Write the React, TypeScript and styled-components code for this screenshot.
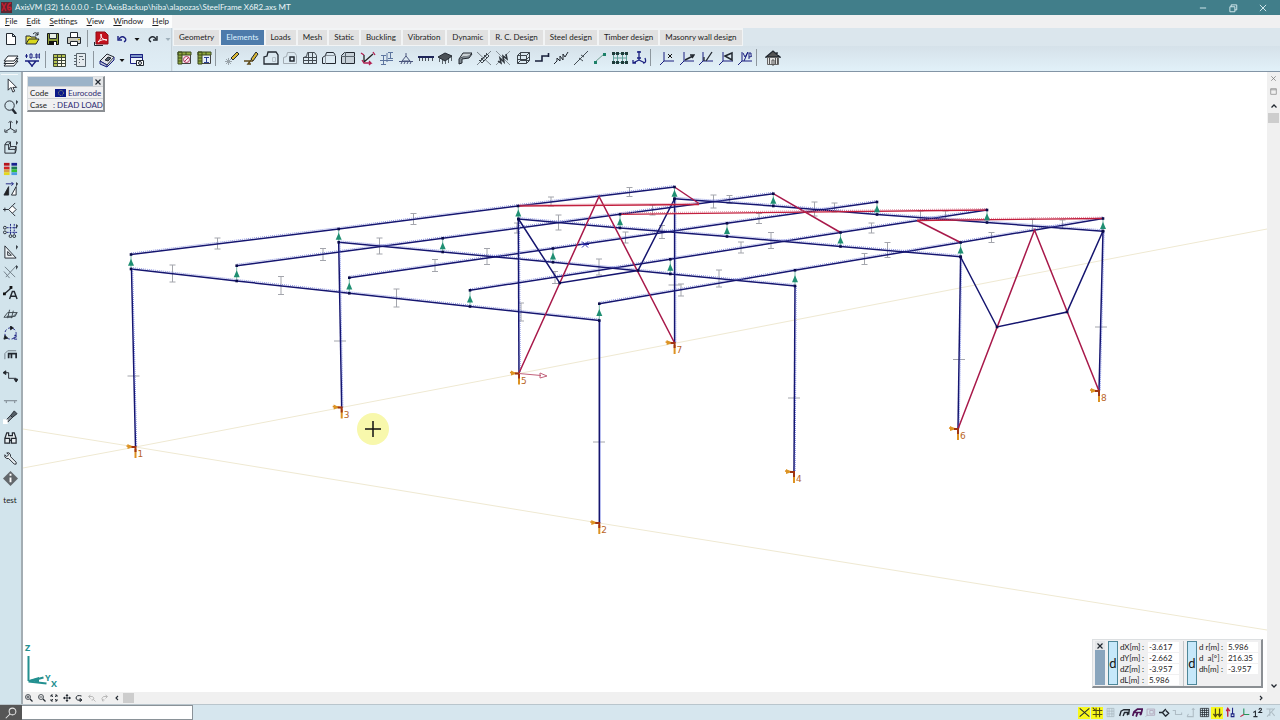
import React from 'react';
import styled, { createGlobalStyle, css } from 'styled-components';

const Global = createGlobalStyle`
  * { box-sizing: border-box; }
  body { margin: 0; background: #fff; }
  body, button, input { font-family: "Lato", "Open Sans", sans-serif; font-size: 8px; color: #1c1c1c; }
  button { border: 0; padding: 0; margin: 0; background: none; display: flex; align-items: center; justify-content: center; }
  svg { display: block; }
`;

const Page = styled.div`
  min-height: 100vh;
  display: flex;
  flex-direction: column;
`;
const TitleBar = styled.header`
  height: 15px;
  padding-right: 2px;
  display: flex;
  align-items: center;
  background: #417e8a;
  color: #eef6f8;
`;
const TitleText = styled.h1`
  margin: 0 auto 0 2px;
  font-size: 8px;
  line-height: 15px;
  font-weight: 400;
`;
const WindowButton = styled.button`
  width: 30px;
  height: 15px;
`;
const MenuBar = styled.nav`
  height: 13px;
  display: flex;
  background: #f0f0f1;
`;
const MenuGroup = styled.div`
  width: 172px;
  padding-left: 5px;
  display: flex;
  gap: 9px;
  background: #fcfdfd;
`;
const MenuItem = styled.button`
  height: 13px;
  line-height: 13px;
`;
const Ribbon = styled.div`
  height: 44px;
  display: flex;
  border-bottom: 1px solid #8395a6;
`;
const FileTools = styled.div`
  width: 172px;
  background: linear-gradient(#d8e5ed, #e0eef6);
  border-right: 1px solid #c6d2da;
`;
const ToolRow = styled.div<{ $gap: number }>`
  height: 21px;
  padding-left: 3px;
  display: flex;
  align-items: center;
  gap: ${p => p.$gap}px;
`;
const ToolButton = styled.button<{ $narrow?: boolean }>`
  width: ${p => (p.$narrow ? 8 : 16)}px;
  height: 16px;
  flex: none;
`;
const Divider = styled.span`
  width: 1px;
  height: 17px;
  flex: none;
  background: #8d979e;
`;
const ModuleArea = styled.div`
  flex: 1;
  min-width: 0;
  padding-left: 1px;
  display: flex;
  flex-direction: column;
  background: #dbe6ed;
`;
const Tabs = styled.div`
  height: 18px;
  padding: 2px 1px 1px;
  align-self: flex-start;
  display: flex;
  gap: 2px;
  background: #f2f4f5;
`;
const Tab = styled.button<{ $active?: boolean }>`
  height: 15px;
  padding: 0 5px 1px;
  white-space: nowrap;
  background: ${p => (p.$active ? '#4d7bab' : '#e1e1e1')};
  color: ${p => (p.$active ? '#dff2ff' : '#1c1c1c')};
`;
const ElementTools = styled.div`
  flex: 1;
  padding: 0 3px 2px;
  display: flex;
  align-items: center;
  background: linear-gradient(#d5e1e9, #e2f1f9);
  ${Divider} { margin: 0 8px 0 3px; }
`;
const IconGroup = styled.div<{ $width: number }>`
  width: ${p => p.$width}px;
  flex: none;
  display: flex;
  justify-content: space-between;
`;
const Workspace = styled.main`
  flex: 1;
  display: flex;
  min-height: 0;
`;
const SideBar = styled.aside`
  width: 23px;
  padding: 2px 3px 0 1px;
  flex: none;
  background: #d2e4ec;
  border-right: 2px solid #a3adb3;
`;
const SideList = styled.div`
  height: 436px;
  display: grid;
  grid-template-rows: repeat(21, 1fr);
  justify-items: center;
  border-top: 1px solid #f4f8fa;
`;
const SideButton = styled.button`
  width: 18px;
`;
const ViewColumn = styled.section`
  flex: 1;
  min-width: 0;
  display: flex;
  flex-direction: column;
`;
const Viewport = styled.div`
  flex: 1;
  position: relative;
  overflow: hidden;
  background: #fff;
`;
const Model = styled.svg`
  width: 100%;
  height: auto;
  font-family: "DejaVu Sans", sans-serif;
`;
const ViewBar = styled.div`
  height: 12px;
  display: flex;
  align-items: center;
  justify-content: space-between;
  background: #f0f0f0;
`;
const ViewTools = styled.div`
  width: 111px;
  display: flex;
  align-items: center;
  justify-content: space-between;
`;
const ViewButton = styled.button`
  width: 12px;
  height: 12px;
  flex: none;
`;
const Thumb = styled.span`
  width: 11px;
  height: 10px;
  flex: none;
  background: #cdcdcd;
`;
const VScroll = styled.div`
  width: 13px;
  flex: none;
  padding-bottom: 12px;
  display: flex;
  flex-direction: column;
  align-items: center;
  background: #f0f0f0;
`;
const ScrollButton = styled.button<{ $tall?: boolean; $end?: boolean }>`
  width: 12px;
  height: ${p => (p.$tall ? 15 : 13)}px;
  margin-top: ${p => (p.$end ? 'auto' : 0)};
`;
const panel = css`
  position: absolute;
  background: #f0f0f1;
  border: 1px solid #dcdfe1;
  border-right: 2px solid #8b8f93;
  border-bottom: 2px solid #8b8f93;
`;
const InfoPanel = styled.section`
  ${panel}
  top: 4px;
  left: 4px;
  width: 78px;
`;
const InfoHead = styled.div`
  height: 9px;
  display: flex;
  background: #9cb3c8;
`;
const CloseButton = styled.button`
  width: 10px;
  height: 9px;
  margin-left: auto;
  background: #e4e6e8;
`;
const InfoRow = styled.div`
  height: 12px;
  padding-left: 2px;
  display: flex;
  align-items: center;
  color: #2b2870;
  border-top: 1px solid #cfd2d5;
  white-space: nowrap;
`;
const InfoKey = styled.span`
  width: 23px;
  color: #222;
`;
const Flag = styled.span`
  width: 11px;
  height: 8px;
  margin: 0 2px;
  background: #0b1888;
  display: grid;
  place-items: center;
`;
const CoordPanel = styled.section`
  ${panel}
  right: 4px;
  bottom: 4px;
  width: 171px;
  height: 49px;
  display: flex;
`;
const Grip = styled.div`
  width: 10px;
  margin: 1px 3px 1px 2px;
  background: #89a5bd;
`;
const ModeButton = styled.button`
  width: 10px;
  margin: 1px 2px 1px 0;
  border: 1px solid #4e8799;
  background: #c6e8fa;
  font-size: 13px;
  color: #111;
`;
const CoordList = styled.dl<{ $first?: boolean }>`
  width: ${p => (p.$first ? 65 : 60)}px;
  margin: 1px 3px 0 0;
  padding-right: ${p => (p.$first ? 4 : 0)}px;
  border-right: ${p => (p.$first ? '1px solid #c3c6c9' : '0')};
`;
const Coord = styled.div`
  height: 11px;
  display: flex;
  align-items: center;
  white-space: nowrap;
  dt { width: 28px; display: flex; justify-content: space-between; padding-right: 4px; }
  dd { flex: 1; height: 10px; line-height: 10px; margin: 0; padding-left: 1px; background: #fff; }
`;
const StatusBar = styled.footer`
  height: 16px;
  padding-right: 3px;
  display: flex;
  align-items: center;
  background: #d6e6ee;
  border-top: 1px solid #b9c5cc;
`;
const SearchIcon = styled.label`
  width: 22px;
  height: 15px;
  display: grid;
  place-items: center;
  background: #565656;
`;
const CommandInput = styled.input`
  width: 171px;
  height: 15px;
  border: 1px solid #8a9298;
  border-left: 0;
  background: #fff;
  outline: 0;
  padding: 0 3px;
`;
const StatusGroup = styled.div`
  width: 199px;
  margin-left: auto;
  display: flex;
  justify-content: space-between;
`;
const StatusButton = styled.button<{ $on?: boolean }>`
  width: 12px;
  height: 12px;
  background: ${p => (p.$on ? '#f7f71c' : 'transparent')};
`;

const K = '#222830';
const N = '#1a1f80';
const G = '#8a939b';

type IconProps = { size?: number; children: React.ReactNode; color?: string; w?: number };
const Icon = ({ size = 16, children, color = K, w = 1 }: IconProps) => (
  <svg width={size} height={size} viewBox="0 0 16 16" fill="none" stroke={color} strokeWidth={w} aria-hidden="true">
    {children}
  </svg>
);

const flyout = <path d="M14 1l2 2-2 3z" fill={K} stroke="none" />;
const axes = <path d="M5 2v9h10M5 11l-4 4" stroke={N} />;

const icons: Record<string, React.ReactNode> = {
  New: <path d="M3.500 2.500h6l3 3v8h-9zM9.500 2.500v3h3" fill="#fff" />,
  Open: <><path d="M2 13V5h4l1 1h5v3" fill="#e9e34a" /><path d="M2 13l3-5h10l-3 5z" fill="#d8d81e" /><path d="M9 3q3-3 5 1M14 1v3h-3" /></>,
  Save: <><path d="M2.500 2.500h11v11h-11z" fill="#8b9c3a" stroke="#111" /><path d="M4.500 2.500h7v5h-7z" fill="#e8efe5" /><path d="M4 10h8v4H4z" fill="#111" stroke="none" /><path d="M9 11h2v3H9z" fill="#fff" stroke="none" /></>,
  Print: <><path d="M4.500 6.500v-5h7v5" fill="#fff" /><path d="M1.500 6.500h13v6h-13z" fill="#c9c8bd" /><path d="M4.500 10.500h7v4h-7z" fill="#fff" /><path d="M12 8.500h2" stroke="#c5b200" /></>,
  PDF: <><path d="M3 1h9l3 3v9H3z" fill="#c3101c" stroke="#8f0c14" /><path d="M5 11c3-3 4-6 3-8-1 3 2 6 6 6-4-1-6 0-9 2" stroke="#fff" /><path d="M1.500 11v3.500H10" /></>,
  Undo: <><path d="M5 8q3-4 6-1 2 2-1 4" stroke={N} strokeWidth="1.4" /><path d="M4 5v4h4" stroke={N} strokeWidth="1.4" /></>,
  Redo: <><path d="M11 8Q8 4 5 7q-2 2 1 4" strokeWidth="1.4" /><path d="M12 5v4H8" strokeWidth="1.4" /></>,
  More: <path d="M3 6h10l-5 6z" fill="#111" stroke="none" />,
  'More redo': <path d="M3 6h10l-5 6z" fill="#9fb0bb" stroke="none" />,
  Layers: <><path d="M5 9h10l-4 5H1z" fill="#fff" /><path d="M5 6.5h10l-4 5H1z" fill="#fff" /><path d="M5 4h10l-4 5H1z" fill="#fff" /></>,
  Levels: <><path d="M1 9h14M4 9l4 5 4-5M8 14v1" stroke={N} strokeWidth="1.4" /><path d="M1 4h3M2.5 2v4M6 2h2v4H6zM10 5v1M12 2h1v4h-1zM15 2h1v4h-1z" stroke={N} /></>,
  Table: <><path d="M2 2h12v12H2z" fill="#fbfbea" stroke="none" /><path d="M2 2h4v12H2zM2 2h12v3H2z" fill="#b5c44e" stroke="none" /><path d="M2.5 2.5h12v12h-12zM6.5 2.500v12M10.500 2.500v12M2.500 5.500h12M2.500 8.500h12M2.500 11.500h12" stroke="#3e4638" /></>,
  Report: <><path d="M4.500 1.500h9v13h-9z" fill="#e4eaee" stroke="#59646c" /><path d="M7 4.500h4M7 7.500h1M10 7.500h2M7 10.500h1M2 3.500h3M2 6.500h3M2 9.500h3M2 12.500h3" stroke="#59646c" /></>,
  Library: <><path d="M1 9l7-7 7 3-7 8z" fill="#e1e4e9" /><path d="M1 9v3l7 3v-2zM8 15l7-7V5" fill="#b9c2ce" stroke={N} /><path d="M6 8l3-3 3 1-3 3z" fill="#52606c" /></>,
  Snapshot: <><path d="M1.500 2.500h12v9h-12z" fill="#eef4fa" stroke={N} /><path d="M1.500 2.500h12v3h-12z" fill="#7d95c8" stroke={N} /><path d="M7.500 8.500h7v5h-7z" fill="#fff" /><circle cx="11" cy="11" r="1.5" /></>,
  Materials: <><path d="M2.500 2.500h12v11h-12z" fill="#f7e9ee" stroke="#444" /><path d="M2 2h4v12H2zM2 2h13v3H2z" fill="#8fa83e" stroke="#3c4a1f" /><path d="M2 8h4M2 11h4M10 2v3" stroke="#3c4a1f" /><circle cx="10.5" cy="9.5" r="3" stroke="#b23a62" /><path d="M8 12l5-5" stroke="#b23a62" /></>,
  Sections: <><path d="M2.500 2.500h12v11h-12z" fill="#e6eef8" stroke="#444" /><path d="M2 2h4v12H2zM2 2h13v3H2z" fill="#8fa83e" stroke="#3c4a1f" /><path d="M2 8h4M2 11h4M10 2v3" stroke="#3c4a1f" /><path d="M8 7.500h5M8 12.500h5M10.5 7v6" stroke="#2b3f90" /></>,
  'Draw objects': <><path d="M7 8l6-6 2 2-6 6z" fill="#d7b534" /><path d="M4.500 8v7M1 11.500h7M2 9l5 5M7 9l-5 5" stroke="#9aa4ab" /></>,
  'Draw directly': <><path d="M8 9l5-7 2 2-5 7z" fill="#d7b534" /><path d="M1 11h9M8 10l-3 4h3" stroke="#5e4a1a" strokeWidth="1.5" /></>,
  Domain: <><path d="M1 14V7l3-1 1-4h8l2 3v9z" strokeWidth="1.3" /><path d="M9.500 7.500h3v4h-3z" stroke="#b5c0c8" /></>,
  Hole: <><path d="M1.500 13.500v-6l3-1 1-4h7l2 3v8z" stroke="#a3adb4" /><path d="M8 7h4v4H8z" strokeWidth="1.5" /></>,
  'Domain mesh': <path d="M1.500 13.500v-6l3-1 1-4h7l2 3v8zM6.500 2v12M10.500 2v12M1 7.500h14M1 10.500h14" stroke="#414950" />,
  'Domain contour': <><path d="M1.500 13.500v-6l3-2 1-3h7l2 3v8z" /><path d="M5 5.500h10M4.500 6v8" stroke={G} /></>,
  'Composite domain': <><path d="M1.500 13.500v-8l3-3h10v11z" fill="#c6d0d7" /><path d="M5.500 2v12M1 6.500h14" stroke="#59646c" /></>,
  'Local axes': <><path d="M4 12L13 4M4 12V5" stroke="#222" strokeWidth="1.3" /><path d="M2 10l2 3h7l-2-2M11 13l-2 2M1 3l3 2M13 2l2 3" stroke="#b21e50" strokeWidth="1.3" /></>,
  'Line elements': <><path d="M1 10.500h13M4.500 6v8M2 5.500h5M2 14.500h5M8 3v9M11.500 2v6M9 2.500h5M9 8.500h5" stroke="#5d759f" /></>,
  'Nodal support': <path d="M8 3v3M8 6l-4 5h8zM1 11.500h14M3 14l1-2M6 14l1-2M9 14l1-2M12 14l1-2" stroke="#4a557c" />,
  'Line support': <><path d="M0 7h16" strokeWidth="2" stroke="#1f265a" /><path d="M1.500 8v3M4.500 8v3M7.500 8v3M10.500 8v3M14.500 8v3" stroke="#4a5259" /></>,
  'Surface support': <><path d="M1 7l7-4 7 3-7 5z" fill="#4b5157" /><path d="M2.500 8v4M5.500 10v4M8.500 11v3M11.500 9v4M14.500 7v4" stroke="#5b646b" /></>,
  'Edge hinge': <><path d="M2 9l4-6h9l-4 4H6z" fill="#cbd2d6" /><path d="M2 9v5l3-1V9l7-1 3-4" fill="#7f8991" /></>,
  Diaphragm: <><path d="M1 2l14 13M1 15L15 1" stroke="#7b858c" /><path d="M3 10l3 3M5 8l3 3M8 5l3 3M10 3l3 3M4 11l7-7M6 13l7-7" stroke="#3f484f" /></>,
  Spring: <><path d="M1 1l14 14M1 15L15 1" stroke="#8b959c" /><path d="M3 11l3 2-1-5 4 4-1-6 4 3-1-5" stroke="#30373e" strokeWidth="1.5" /></>,
  'Gap element': <path d="M2.500 5.500l3-3h9v8l-3 3h-9zM2.500 5.500h9v8M11.500 5.500l3-3M2.500 9.500h9l3-3M5.500 2.500v8l-3 3M5.500 10.500h9" stroke="#3c444b" />,
  'Link element': <path d="M1 11h7V6h7M14.500 3v4" stroke="#18203b" strokeWidth="1.6" />,
  'Line link': <path d="M1 14l3-3V8l3 3V6l3 4V4l2 3 3-5" />,
  'Edge link': <path d="M1 15L15 1M6 8l4 3M8 5l3 2" stroke="#424b52" />,
  Reference: <><path d="M3 12l9-8" stroke="#6b9c8c" /><path d="M2 11h3v3H2zM11 3h3v3h-3z" fill="#1c8068" stroke="none" /></>,
  'Mesh area': <><path d="M1.500 3.500h13v9h-13zM5.500 3v10M10.500 3v10M1 8h14" stroke="#5fa09a" /><path d="M0 2h3v3H0zM4 2h3v3H4zM9 2h3v3H9zM13 2h3v3h-3zM0 11h3v3H0zM4 11h3v3H4zM9 11h3v3H9zM13 11h3v3h-3z" fill="#1f3a3a" stroke="none" /></>,
  Freedom: <><path d="M8 1v9M8 10l-6 3M8 10l6 3M6 2h4M2 10v3h3M12 13q4 0 2-5M6 8h4" stroke={N} strokeWidth="1.3" /></>,
  'Reference X': <>{axes}<path d="M9 4l4 4M13 4L9 8" stroke="#111" /></>,
  'Reference vector': <>{axes}<path d="M6 10l8-4M11 5h4l-2 3" strokeWidth="1.5" /></>,
  'Reference axis': <>{axes}<path d="M8 11l6-9M6 7v4" strokeWidth="1.3" /></>,
  'Reference plane': <>{axes}<path d="M7 6l7-3v7z" strokeWidth="1.5" /></>,
  'Reference angle': <>{axes}<path d="M6 3l2 4 3-5-4 9M12 9V3q3-1 2 2 2 2-2 2" stroke={N} /></>,
  Architecture: <><path d="M1 7l7-6 7 6zM12 2v3" fill="#555" strokeWidth="1.3" /><path d="M2.500 7.500h11v7h-11z" fill="#e4e4e4" stroke="#666" /><path d="M4.500 8v6M10.500 8v6M12.500 8v6M7 10h2v5H7z" stroke="#555" /></>,
  Select: <path d="M5.5 1v12l3-3 2 5 2-1-2-4h4z" fill="#fff" />,
  Zoom: <><circle cx="7" cy="7" r="5" /><path d="M10 11l4 5" strokeWidth="2.5" />{flyout}</>,
  Views: <><path d="M8 3v7M8 10l-5 3M8 10l5 3M6 4l2-2 2 2M2 11v3h3M14 11v3h-3" />{flyout}</>,
  'Display mode': <><path d="M2 5h4v5h7v4H2zM2 5l2-3h4v5h6v4l-1 3M6 5l2-3M6 10l2-3M13 10l1-3" />{flyout}</>,
  Palette: <g stroke="none"><path d="M1 2h6v3H1z" fill="#b4141c" /><path d="M9 2h6v3H9z" fill="#19228f" /><path d="M1 6h6v3H1z" fill="#d22224" /><path d="M9 6h6v3H9z" fill="#1d7a54" /><path d="M1 9h6v3H1z" fill="#d8a046" /><path d="M9 9h6v3H9z" fill="#35c232" /><path d="M1 12h6v3H1z" fill="#e4d81e" /><path d="M9 12h6v3H9z" fill="#4e9de0" /></g>,
  Transform: <><path d="M1 15l5-9v9z" fill="#222" /><path d="M9 15l5-9v9z" fill="#fff" /><path d="M3 3h8M9 1l2 2-2 2" stroke={N} />{flyout}</>,
  Workplane: <><path d="M6 8l4-4 4 4-4 4z" fill="#fff" /><path d="M0 8h6M10 4l3-3M10 12l3 3M2 6v4" /></>,
  Grid: <><path d="M4 5h11M4 10h11M8 1v12M12 1v12" stroke={N} strokeDasharray="2 1" /><circle cx="2" cy="5" r="1.5" /><circle cx="2" cy="10" r="1.5" /><circle cx="8" cy="14" r="1.5" /><circle cx="12" cy="14" r="1.5" />{flyout}</>,
  Geometry: <><path d="M2 2v13h12zM5 8v4h4z" fill="#eef4f7" />{flyout}</>,
  Intersect: <><path d="M2 3l11 11M14 2L3 14M1 8l6 7" stroke="#6f7c85" />{flyout}</>,
  'Text labels': <><path d="M2 9l7-6M7 15l3-8h2l3 8M8 12h6" strokeWidth="1.5" /><path d="M0 8h3v3H0zM7 1h3v3H7z" fill="#111" stroke="none" /></>,
  Sectioning: <path d="M1 12l4-5h10l-2 4H4M1 12h9l5-5M7 4l-2 9M11 5l-2 8" stroke="#3c464d" />,
  Renumber: <><circle cx="8" cy="8" r="6" stroke={N} strokeDasharray="3 2" /><path d="M8 0l3 2-3 2zM2 10l-1 4 4-1z" fill="#111" /><path d="M12 10h2v2h-2v2h3" stroke={N} /></>,
  Parts: <><path d="M6 12V7h8v5M9 12V7" strokeWidth="1.8" /><path d="M2 13V7l3-3h9" stroke="#6f7c85" /></>,
  Connect: <><path d="M2 5h4v6h8v2" /><path d="M3 3L0 5l3 2zM12 12l2 3 2-3z" fill="#222" /></>,
  Ruler: <path d="M1 12.500h14M3.500 13v2M12.500 13v2" stroke="#717b83" />,
  Light: <><path d="M3 12l5-5 2 2-5 5z" fill="#8a939b" /><path d="M8 7l4-5 3 3-5 4z" fill="#555f67" /><path d="M0 11h5v5H0z" fill="#fff" stroke="none" /></>,
  Find: <path d="M2 9l2-6h2v3h4V3h2l2 6M2 9h5v5H2zM9 9h5v5H9zM7 11h2" strokeWidth="1.3" fill="#e9eff2" />,
  Settings: <path d="M2 4l2 2 2-2-2-2q3-1 4 2v2l6 6q1 3-2 2L6 8H4Q1 7 2 4z" fill="#e9eff2" />,
  Info: <><path d="M8 0l8 8-8 8-8-8z" fill="#62676b" stroke="none" /><path d="M8 7v5M8 3v2" stroke="#fff" strokeWidth="2" /></>,
  'Zoom in': <><circle cx="6" cy="6" r="5" strokeWidth="1.5" /><path d="M10 10l5 5" strokeWidth="2.5" /><path d="M3 6h6M6 3v6" strokeWidth="1.5" /></>,
  'Zoom out': <><circle cx="6" cy="6" r="5" strokeWidth="1.5" /><path d="M10 10l5 5" strokeWidth="2.5" /><path d="M3 6h6" strokeWidth="1.5" /></>,
  'Fit view': <path d="M2 6V2h4M10 2h4v4M14 10v4h-4M6 14H2v-4M2 2l4 4M14 2l-4 4M14 14l-4-4M2 14l4-4" strokeWidth="1.8" />,
  Pan: <><path d="M8 1v14M1 8h14" strokeWidth="1.8" /><path d="M8 0l3 4H5zM8 16l3-4H5zM0 8l4-3v6zM16 8l-4-3v6z" fill={K} stroke="none" /></>,
  Rotate: <path d="M13 4Q3 1 2 8q1 6 11 4M10 9l4 3-4 3z" strokeWidth="2" />,
  'Previous view': <path d="M2 5h7q5 3 1 7H7M5 2L1 5l4 4M11 11l4 4" stroke="#a8a8a8" strokeWidth="1.5" />,
  'Next view': <path d="M14 5H7q-6 4-1 7h3M11 2l4 3-4 4M4 11l2 4" stroke="#a8a8a8" strokeWidth="1.5" />,
  'Scroll left': <path d="M10 4L6 8l4 4" strokeWidth="2.2" />,
  'Scroll right': <path d="M6 4l4 4-4 4" strokeWidth="2.2" />,
  'Scroll up': <path d="M3 11l5-5 5 5" strokeWidth="2.5" />,
  'Scroll down': <path d="M3 5l5 5 5-5" strokeWidth="2.5" />,
  'Close view': <path d="M4 4l8 8M12 4l-8 8" stroke="#777" strokeWidth="1.3" />,
  'Maximize view': <path d="M3 3h10v10H3zM3 5h10" stroke="#888" strokeWidth="1.3" />,
  Cross: <path d="M3 3l10 10M13 3L3 13" strokeWidth="2.3" />,
};

const statusIcons: [string, boolean, React.ReactNode][] = [
  ['Cursor snap', true, <path d="M1 2l14 12M15 2L1 14" strokeWidth="1.5" />],
  ['Grid snap', true, <path d="M1 5h14M1 11h14M6 1v14M11 1v14M1 1l5 5" stroke="#514b10" strokeWidth="1.5" />],
  ['Line snap', false, <path d="M3 2h10v12H3zM6 2v12M10 2v12M3 6h10M3 10h10" stroke="#a5b3bb" />],
  ['Parts view', false, <path d="M1 13l2-7 4-2h8l-1 7M6 13l2-5h5l-1 4" strokeWidth="2" />],
  ['Logical parts', false, <path d="M1 13l2-6 5-4h7l-2 8M6 14l2-6h5l-1 4M3 8h8" stroke="#4d1455" strokeWidth="2.5" />],
  ['Workplane view', false, <path d="M3 3h11v9H3zM3 12l-2 2M7 5h5v5H7z" stroke="#b3a8bd" strokeWidth="1.3" />],
  ['Symmetry', false, <path d="M0 8h5l5-5M5 8l5 6M10 5l4 4-4 4" strokeWidth="2" />],
  ['Connect lines', false, <path d="M1 5h4v6h9V8" stroke="#aebcc4" strokeWidth="1.5" />],
  ['Coordinate frame', false, <path d="M3 14h9V2M3 14l2-4M10 4l2-2 2 2" stroke="#aebcc4" strokeWidth="1.5" />],
  ['Mesh display', false, <path d="M2 2h12v12H2zM5 2v12M8 2v12M11 2v12M2 5h12M2 8h12M2 11h12" strokeWidth="1.1" />],
  ['Loads display', true, <path d="M5 2v11M11 2v11M2 10l3 4 3-4M9 10l2 4 3-4" stroke="#514b10" strokeWidth="1.8" />],
  ['Symbols display', false, <><path d="M4 14V3M2 6l2-4 3 4" stroke="#c02444" strokeWidth="2" /><path d="M11 1v8M9 10h4v4H9z" stroke={N} strokeWidth="1.5" /></>],
  ['Local systems', false, <><path d="M7 2v9h8" stroke="#25945b" strokeWidth="1.6" /><path d="M7 11l-5 3" stroke="#c02444" strokeWidth="1.6" /></>],
  ['Numbering', false, <path d="M2 8l3-2v8M2 14h6M10 4q1-3 3-2 2 1-1 4l-2 2h5" strokeWidth="1.5" />],
  ['Background', false, <path d="M2 3h10M7 3v10M3 14L14 2M10 8l4 5" stroke="#aebcc4" strokeWidth="1.5" />],
];

const elementNames = ['Draw objects', 'Draw directly', 'Domain', 'Hole', 'Domain mesh', 'Domain contour', 'Composite domain', 'Local axes', 'Line elements', 'Nodal support', 'Line support', 'Surface support', 'Edge hinge', 'Diaphragm', 'Spring', 'Gap element', 'Link element', 'Line link', 'Edge link', 'Reference', 'Mesh area', 'Freedom'];
const referenceNames = ['Reference X', 'Reference vector', 'Reference axis', 'Reference plane', 'Reference angle'];
const sideNames = ['Select', 'Zoom', 'Views', 'Display mode', 'Palette', 'Transform', 'Workplane', 'Grid', 'Geometry', 'Intersect', 'Text labels', 'Sectioning', 'Renumber', 'Parts', 'Connect', 'Ruler', 'Light', 'Find', 'Settings', 'Info'];
const viewNames = ['Zoom in', 'Zoom out', 'Fit view', 'Pan', 'Rotate', 'Previous view', 'Next view', 'Scroll left'];
const tabs = ['Geometry', 'Elements', 'Loads', 'Mesh', 'Static', 'Buckling', 'Vibration', 'Dynamic', 'R. C. Design', 'Steel design', 'Timber design', 'Masonry wall design'];

const Tool = ({ name, narrow }: { name: string; narrow?: boolean }) => (
  <ToolButton aria-label={name} $narrow={narrow}><Icon size={narrow ? 8 : 16}>{icons[name]}</Icon></ToolButton>
);

type P = [number, number];
const pts = (p: P[]) => p.map(q => q.join(',')).join(' ');

const purlins: P[][] = [
  [[131, 254.5], [338.7, 229], [518, 206], [674.5, 187]],
  [[236.7, 265.7], [442.7, 238.3], [620, 214.3], [773.3, 193.7]],
  [[349.3, 277.7], [553, 248.5], [727, 223.3], [877, 202]],
  [[470, 290.3], [670.3, 259.3], [840.5, 232.5], [987, 210]],
  [[599.3, 303.7], [795, 270.3], [960.6, 242.5], [1103, 218.5]],
];
const rafters: P[][] = [
  [[131, 269], [236.7, 281], [349.3, 293.3], [470, 306.5], [599.3, 320.5]],
  [[338.7, 242.3], [442.7, 252], [553, 262.3], [670.3, 274], [795, 286]],
  [[518.3, 219], [620, 228], [727, 236.5], [840.5, 246.5], [960.6, 256.7]],
  [[674.5, 198.7], [773.3, 206], [877, 214.5], [987, 222.5], [1103, 231.3]],
];
const columns: P[][] = [
  [[131.5, 269], [135.5, 447]], [[599.3, 320.5], [599.3, 523]],
  [[338.7, 242.3], [341.7, 408]], [[795, 286], [794, 472]],
  [[518.3, 219], [519, 373.5]], [[960.6, 256.7], [958, 429]],
  [[674.6, 198.7], [674.6, 343]], [[1103, 231.3], [1099, 391]],
];
const struts: P[][] = [
  [[518.5, 219], [559.7, 283], [638, 270.5], [674.5, 199]],
  [[960.6, 257], [997, 327], [1067, 312], [1103, 231]],
];
const braces: P[][] = [
  [[519, 373], [599, 196.5], [674.6, 343]],
  [[958, 429], [1034.5, 230], [1099, 391]],
  [[674.5, 187], [699, 203.5]], [[773.3, 193.7], [840.5, 232.5]], [[917, 220.5], [960.6, 242.5]],
];
const ties: P[][] = [[[518.5, 206], [699, 204.5]], [[620, 214.3], [987, 210]], [[917, 220.5], [1103, 218.5]]];
const marks: [number, number, number][] = [
  [217.5, 243.5, 11], [413.5, 219, 11], [172.5, 273.5, 17], [281, 285.5, 18], [396.5, 298, 18], [323, 254.5, 12], [435, 265.5, 12],
  [379.5, 246, 16], [487, 256.5, 16], [521, 312, 18], [551, 201.5, 9], [558.5, 222.5, 15], [629.5, 192, 9], [652.5, 210, 10],
  [625.5, 237.5, 11], [662, 232, 13], [555, 277.5, 12], [599, 267, 16], [681, 290, 12], [719, 278.5, 17], [741, 247.5, 11],
  [759, 218.5, 10], [771, 240.5, 16], [713.5, 201.5, 13], [729.5, 199.5, 8], [814.5, 209, 14], [834.5, 207.5, 9], [871.5, 228, 10],
  [864.5, 259, 11], [887.5, 250, 15], [920.5, 215.5, 9], [945.5, 215, 8], [991.5, 237.5, 10], [1032.5, 225, 12], [1062.5, 224.5, 9], [517, 228, 10],
];
const columnMarks: P[] = [[133.5, 376], [340, 341], [599, 442], [794, 398], [959, 359.5], [1101, 327], [674.5, 285]];
const supports: [number, number, string][] = [[135.5, 447, '1'], [599.3, 523, '2'], [341.7, 407.5, '3'], [794, 472, '4'], [519, 373.5, '5'], [958, 429, '6'], [674.6, 343, '7'], [1099, 391, '8']];
const risers = rafters.flatMap((r, i) => r.map((q, j): [number, number, number] => [q[0], q[1], purlins[j][i][1]]));

const NAVY = '#15156f';
const StructureModel = () => (
  <Model viewBox="23 72 1244 620" role="img" aria-label="Steel frame model">
    <path d="M23 468L135.5 447 519 373.5 1130 255 1267 229M23 429L135.5 447 599 523 1267 630" fill="none" stroke="#efe9d2" />
    <g stroke="#a3a5ac" strokeWidth="1" fill="none">
      {marks.map(([x, y, h]) => <path key={`${x}-${y}`} d={`M${x - 3} ${y - h / 2}h6M${x - 3} ${y + h / 2}h6M${x} ${y - h / 2}v${h}`} />)}
      {columnMarks.map(([x, y]) => <path key={`${x}-${y}`} d={`M${x - 6} ${y}h12`} />)}
    </g>
    <g fill="none">
      {[...purlins, ...rafters].map((p, i) => (
        <g key={i}>
          <polyline points={pts(p)} stroke={NAVY} strokeWidth="1.5" />
          <polyline points={pts(p.map(([x, y]): P => [x, y - 1.5]))} stroke="#6f7ad8" strokeWidth="0.8" strokeDasharray="1 1" />
        </g>
      ))}
      {columns.map((p, i) => (
        <g key={i}>
          <polyline points={pts(p)} stroke={NAVY} strokeWidth="1.5" />
          <polyline points={pts(p.map(([x, y]): P => [x + 1.2, y]))} stroke="#5b6be0" strokeWidth="0.8" strokeDasharray="1 1" />
        </g>
      ))}
      {struts.map((p, i) => <polyline key={i} points={pts(p)} stroke={NAVY} strokeWidth="1.5" />)}
      {braces.map((p, i) => <polyline key={i} points={pts(p)} stroke="#a8194a" strokeWidth="1.5" />)}
      {ties.map((p, i) => (
        <g key={i}>
          <polyline points={pts(p)} stroke="#c2203e" strokeWidth="1.3" />
          <polyline points={pts(p.map(([x, y]): P => [x, y - 1.3]))} stroke="#d9708a" strokeWidth="0.8" strokeDasharray="1 1" />
        </g>
      ))}
    </g>
    <g stroke="#7ab8a8" strokeWidth="1" fill="#1f8f72">
      {risers.map(([x, y, top]) => {
        const mid = (y + top) / 2;
        return <g key={`${x}-${y}`}><path d={`M${x} ${y}V${top}`} /><path d={`M${x} ${mid - 3}l3 7h-6z`} stroke="none" /></g>;
      })}
    </g>
    <g fill="#0b0b4a">
      {[...purlins, ...rafters, ...struts].flat().map(([x, y], i) => <rect key={i} x={x - 1.3} y={y - 1.3} width="2.6" height="2.6" />)}
    </g>
    {supports.map(([x, y, label]) => (
      <g key={label}>
        <path d={`M${x - 9} ${y - 1}l9 1`} stroke="#e08a1c" strokeWidth="1.5" />
        <path d={`M${x - 8} ${y - 3}l6 3-6 2z`} fill="#dc9424" />
        <path d={`M${x} ${y + 2}v9`} stroke="#dd9222" strokeWidth="2" />
        <path d={`M${x - 4} ${y}h4v5`} stroke="#a03412" strokeWidth="2" fill="none" />
        <text x={x + 2} y={y + 10} fontSize="9" fill="#b9651f">{label}</text>
      </g>
    ))}
    <path d="M519 373.5l22 2M540 373l7 3-7 2z" stroke="#c2627c" fill="none" />
    <path d="M582 241.5l6 6M588 241.5l-6 6M581 244.5h8" stroke="#2424a0" fill="none" />
    <circle cx="373" cy="429" r="16" fill="#f8f8ac" />
    <path d="M365 429h16M373 421v16" stroke="#111" strokeWidth="1.5" />
    <path d="M28.5 656v25M28.5 681.5l15-4M28.5 681.5l18 2" stroke="#239090" strokeWidth="2" fill="none" />
    <path d="M29 680l10-3v6z" fill="#239090" />
    <g fill="#239090" fontSize="9" fontWeight="700" fontFamily="Open Sans, sans-serif">
      <text x="25" y="651">Z</text>
      <text x="45" y="681">Y</text>
      <text x="51" y="687">X</text>
    </g>
  </Model>
);

export default function App() {
  return (
    <Page>
      <Global />
      <TitleBar>
        <svg width="13" height="13" viewBox="0 0 13 13" aria-hidden="true">
          <path d="M1 1h11v11H1z" fill="#5d2630" />
          <path d="M2 2l4 8M6 2l-4 8M11 2Q7 3 8 8q1 2 3 0 0-3-3-1" stroke="#c01e30" strokeWidth="1.5" fill="none" />
        </svg>
        <TitleText>AxisVM (32) 16.0.0.0 - D:\AxisBackup\hiba\alapozas\SteelFrame X6R2.axs MT</TitleText>
        <WindowButton aria-label="Minimize"><Icon size={10} color="#d8ecf0" w={1.5}><path d="M3 8h10" /></Icon></WindowButton>
        <WindowButton aria-label="Restore"><Icon size={10} color="#d8ecf0" w={1.5}><path d="M3 6h8v8H3zM5 6V3h9v8h-3" /></Icon></WindowButton>
        <WindowButton aria-label="Close"><Icon size={10} color="#d8ecf0" w={1.5}><path d="M3 3l10 10M13 3L3 13" /></Icon></WindowButton>
      </TitleBar>
      <MenuBar>
        <MenuGroup>
          {['File', 'Edit', 'Settings', 'View', 'Window', 'Help'].map(m => (
            <MenuItem key={m}><u>{m[0]}</u>{m.slice(1)}</MenuItem>
          ))}
        </MenuGroup>
      </MenuBar>
      <Ribbon>
        <FileTools>
          <ToolRow $gap={5}>
            <Tool name="New" /><Tool name="Open" /><Tool name="Save" /><Tool name="Print" />
            <Divider />
            <Tool name="PDF" />
            <IconGroup $width={58}>
              <Tool name="Undo" /><Tool name="More" narrow /><Tool name="Redo" /><Tool name="More redo" narrow />
            </IconGroup>
          </ToolRow>
          <ToolRow $gap={5}>
            <Tool name="Layers" /><Tool name="Levels" />
            <Divider />
            <Tool name="Table" /><Tool name="Report" />
            <Divider />
            <IconGroup $width={46}>
              <Tool name="Library" /><Tool name="More" narrow /><Tool name="Snapshot" />
            </IconGroup>
          </ToolRow>
        </FileTools>
        <ModuleArea>
          <Tabs role="tablist">
            {tabs.map(t => <Tab key={t} role="tab" aria-selected={t === 'Elements'} $active={t === 'Elements'}>{t}</Tab>)}
          </Tabs>
          <ElementTools>
            <IconGroup $width={36}><Tool name="Materials" /><Tool name="Sections" /></IconGroup>
            <Divider />
            <IconGroup $width={423}>{elementNames.map(n => <Tool key={n} name={n} />)}</IconGroup>
            <Divider />
            <IconGroup $width={94}>{referenceNames.map(n => <Tool key={n} name={n} />)}</IconGroup>
            <Divider />
            <Tool name="Architecture" />
          </ElementTools>
        </ModuleArea>
      </Ribbon>
      <Workspace>
        <SideBar>
          <SideList>
            {sideNames.map(n => <SideButton key={n} aria-label={n}><Icon size={15}>{icons[n]}</Icon></SideButton>)}
            <SideButton>test</SideButton>
          </SideList>
        </SideBar>
        <ViewColumn>
          <Viewport>
            <StructureModel />
            <InfoPanel>
              <InfoHead><CloseButton aria-label="Close info"><Icon size={8}>{icons.Cross}</Icon></CloseButton></InfoHead>
              <InfoRow>
                <InfoKey>Code</InfoKey>
                <Flag><svg width="8" height="8" viewBox="0 0 8 8"><circle cx="4" cy="4" r="2.5" fill="none" stroke="#b9bf6c" strokeDasharray="1 1" strokeWidth="0.8" /></svg></Flag>
                <span>Eurocode</span>
              </InfoRow>
              <InfoRow><InfoKey>Case</InfoKey><span>: DEAD LOAD</span></InfoRow>
            </InfoPanel>
            <CoordPanel>
              <Grip><CloseButton aria-label="Close coordinates"><Icon size={8}>{icons.Cross}</Icon></CloseButton></Grip>
              <ModeButton aria-label="Relative cartesian">d</ModeButton>
              <CoordList $first>
                {[['dX[m]', '-3.617'], ['dY[m]', '-2.662'], ['dZ[m]', '-3.957'], ['dL[m]', '5.986']].map(([k, v]) => (
                  <Coord key={k}><dt><span>{k}</span><span>:</span></dt><dd>{v}</dd></Coord>
                ))}
              </CoordList>
              <ModeButton aria-label="Relative polar">d</ModeButton>
              <CoordList>
                {[['d r[m]', '5.986'], ['d \u00a0a[°]', '216.35'], ['dh[m]', '-3.957']].map(([k, v]) => (
                  <Coord key={k}><dt><span>{k}</span><span>:</span></dt><dd>{v}</dd></Coord>
                ))}
              </CoordList>
            </CoordPanel>
          </Viewport>
          <ViewBar>
            <ViewTools>
              {viewNames.map(n => <ViewButton key={n} aria-label={n}><Icon size={8}>{icons[n]}</Icon></ViewButton>)}
              <Thumb />
            </ViewTools>
            <ViewButton aria-label="Scroll right"><Icon size={8}>{icons['Scroll right']}</Icon></ViewButton>
          </ViewBar>
        </ViewColumn>
        <VScroll>
          <ScrollButton aria-label="Close view"><Icon size={9}>{icons['Close view']}</Icon></ScrollButton>
          <ScrollButton aria-label="Maximize view"><Icon size={9}>{icons['Maximize view']}</Icon></ScrollButton>
          <ScrollButton $tall aria-label="Scroll up"><Icon size={8}>{icons['Scroll up']}</Icon></ScrollButton>
          <Thumb />
          <ScrollButton $end aria-label="Scroll down"><Icon size={8}>{icons['Scroll down']}</Icon></ScrollButton>
        </VScroll>
      </Workspace>
      <StatusBar>
        <SearchIcon htmlFor="command" aria-label="Search">
          <Icon size={12} color="#e6e6e6" w={1.4}><circle cx="10" cy="6" r="4.5" /><path d="M7 9l-6 6" /></Icon>
        </SearchIcon>
        <CommandInput id="command" />
        <StatusGroup>
          {statusIcons.map(([n, on, d]) => <StatusButton key={n} aria-label={n} $on={on}><Icon size={11}>{d}</Icon></StatusButton>)}
        </StatusGroup>
      </StatusBar>
    </Page>
  );
}
